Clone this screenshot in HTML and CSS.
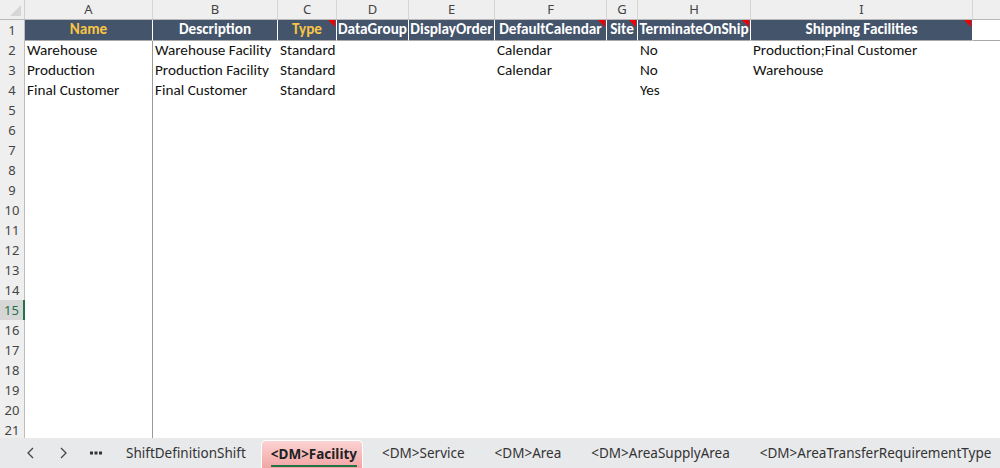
FILE: index.html
```html
<!DOCTYPE html>
<html>
<head>
<meta charset="utf-8">
<link rel="stylesheet" href="styles.css">
</head>
<body>
<div class="app">
  <div class="sheet">
    <div class="row colhead">
      <div class="corner"></div>
      <div class="ch">A</div><div class="ch">B</div><div class="ch">C</div><div class="ch">D</div><div class="ch">E</div><div class="ch">F</div><div class="ch">G</div><div class="ch">H</div><div class="ch">I</div><div class="ch last"></div>
    </div>
    <div class="row hdr">
      <div class="rh">1</div>
      <div class="hc gold">Name</div>
      <div class="hc">Description</div>
      <div class="hc gold note">Type</div>
      <div class="hc">DataGroup</div>
      <div class="hc">DisplayOrder</div>
      <div class="hc note">DefaultCalendar</div>
      <div class="hc note">Site</div>
      <div class="hc note">TerminateOnShip</div>
      <div class="hc note">Shipping Facilities</div>
      <div class="hc blank"></div>
    </div>
    <div class="row">
      <div class="rh">2</div>
      <div class="c fa">Warehouse</div><div class="c">Warehouse Facility</div><div class="c">Standard</div><div class="c"></div><div class="c"></div><div class="c">Calendar</div><div class="c"></div><div class="c">No</div><div class="c">Production;Final Customer</div><div class="c"></div>
    </div>
    <div class="row">
      <div class="rh">3</div>
      <div class="c fa">Production</div><div class="c">Production Facility</div><div class="c">Standard</div><div class="c"></div><div class="c"></div><div class="c">Calendar</div><div class="c"></div><div class="c">No</div><div class="c">Warehouse</div><div class="c"></div>
    </div>
    <div class="row">
      <div class="rh">4</div>
      <div class="c fa">Final Customer</div><div class="c">Final Customer</div><div class="c">Standard</div><div class="c"></div><div class="c"></div><div class="c"></div><div class="c"></div><div class="c">Yes</div><div class="c"></div><div class="c"></div>
    </div>
    <div class="row"><div class="rh">5</div><div class="c fa"></div></div>
    <div class="row"><div class="rh">6</div><div class="c fa"></div></div>
    <div class="row"><div class="rh">7</div><div class="c fa"></div></div>
    <div class="row"><div class="rh">8</div><div class="c fa"></div></div>
    <div class="row"><div class="rh">9</div><div class="c fa"></div></div>
    <div class="row"><div class="rh">10</div><div class="c fa"></div></div>
    <div class="row"><div class="rh">11</div><div class="c fa"></div></div>
    <div class="row"><div class="rh">12</div><div class="c fa"></div></div>
    <div class="row"><div class="rh">13</div><div class="c fa"></div></div>
    <div class="row"><div class="rh">14</div><div class="c fa"></div></div>
    <div class="row"><div class="rh sel">15</div><div class="c fa"></div></div>
    <div class="row"><div class="rh">16</div><div class="c fa"></div></div>
    <div class="row"><div class="rh">17</div><div class="c fa"></div></div>
    <div class="row"><div class="rh">18</div><div class="c fa"></div></div>
    <div class="row"><div class="rh">19</div><div class="c fa"></div></div>
    <div class="row"><div class="rh">20</div><div class="c fa"></div></div>
    <div class="row"><div class="rh">21</div><div class="c fa"></div></div>
  </div>
  <div class="tabs">
    <div class="nav">
      <span class="nb">
        <svg width="10" height="12" viewBox="0 0 10 12"><path d="M7 1 L2 6 L7 11" fill="none" stroke="#444" stroke-width="1.3"/></svg>
      </span>
      <span class="nb">
        <svg width="10" height="12" viewBox="0 0 10 12"><path d="M3 1 L8 6 L3 11" fill="none" stroke="#444" stroke-width="1.3"/></svg>
      </span>
      <span class="nb dots">
        <svg width="12" height="4" viewBox="0 0 12 4"><rect x="0" y="0.5" width="3" height="3" fill="#333"/><rect x="4.5" y="0.5" width="3" height="3" fill="#333"/><rect x="9" y="0.5" width="3" height="3" fill="#333"/></svg>
      </span>
    </div>
    <div class="tab first">ShiftDefinitionShift</div>
    <div class="sep"></div>
    <div class="tab active"><span>&lt;DM&gt;Facility</span></div>
    <div class="sep"></div>
    <div class="tab">&lt;DM&gt;Service</div>
    <div class="sep"></div>
    <div class="tab">&lt;DM&gt;Area</div>
    <div class="sep"></div>
    <div class="tab">&lt;DM&gt;AreaSupplyArea</div>
    <div class="sep"></div>
    <div class="tab">&lt;DM&gt;AreaTransferRequirementType</div>
  </div>
</div>
</body>
</html>
```
FILE: styles.css
```css
* { box-sizing: border-box; }
html, body { margin: 0; padding: 0; background: #fff; }
body { width: 1000px; height: 468px; overflow: hidden; }

.app { display: flex; flex-direction: column; height: 468px; }

.sheet { flex: 1; display: flex; flex-direction: column; overflow: hidden; }

.row {
  display: grid;
  grid-template-columns: 25px 128px 125px 59px 72px 86px 112px 31px 113px 222px 1fr;
  height: 20px;
  flex: none;
  font-family: Calibri, Carlito, Lato, "Liberation Sans", sans-serif;
  font-size: 15.2px;
  color: #111;
}

.colhead { background: #efefef; border-bottom: 1px solid #b9b9b9; height: 20px; }
.corner { position: relative; border-right: 1px solid #d0d0d0; }
.corner::after {
  content: ""; position: absolute; right: 3px; bottom: 3px;
  border-left: 11px solid transparent; border-bottom: 11px solid #d6d6d6;
}
.ch {
  border-right: 1px solid #d6d6d6;
  text-align: center; line-height: 19px;
  font-family: "Noto Sans", "Open Sans", sans-serif; font-size: 13px; color: #444;
}
.ch.last { border-right: none; }

.rh {
  background: #efefef; border-right: 1px solid #bdbdbd; border-bottom: 1px solid #dadada;
  text-align: center; line-height: 20px;
  font-family: "Noto Sans", "Open Sans", sans-serif; font-size: 13px; color: #444;
}
.rh.sel { background: #d6d6d6; color: #217346; border-right: 2px solid #217346; }

.hdr .rh { border-bottom: 1px solid #a9a9a9; }
.hc {
  position: relative;
  background: #44546a; color: #fff; font-weight: bold;
  border-right: 1px solid #fff; border-bottom: 1px solid #a9a9a9;
  text-align: center; line-height: 19px; white-space: nowrap; overflow: hidden;
}
.hc.gold { color: #f8c447; }
.hc:first-of-type { border-right: 1px solid #9a9a9a; }
.hc.blank { background: #fff; border-right: none; }
.note::after {
  content: ""; position: absolute; top: 0; right: 1px;
  border-left: 7px solid transparent; border-top: 7px solid #f00000;
}

.c { padding-left: 2px; line-height: 21px; white-space: nowrap; overflow: hidden; }
.c.fa { border-right: 1px solid #9a9a9a; }

.tabs {
  height: 30px; flex: none; background: #e8e9eb; display: flex; align-items: center;
  font-family: "Noto Sans", "Open Sans", sans-serif; font-size: 13.5px; color: #333;
}
.nav { display: flex; align-items: center; padding-left: 26px; }
.nb { width: 32px; display: flex; align-items: center; }
.nb.dots { width: 36px; }
.tab { padding: 0 15px; white-space: nowrap; line-height: 30px; }
.tab.first { padding-left: 0; padding-right: 12px; }
.sep { width: 1px; height: 18px; background: #c4c4c4; }
.tab.active {
  align-self: flex-end; height: 28px; line-height: 26px;
  padding: 0 5px 0 9px; margin: 0 4px 0 3px;
  background: linear-gradient(#fbd3d3, #f3a5a5);
  border: 1px solid #fff; border-bottom: none; border-radius: 5px 5px 0 0;
  font-weight: bold; color: #222;
}
.tab.active span { display: inline-block; border-bottom: 2px solid #217346; line-height: 22px; }
```
